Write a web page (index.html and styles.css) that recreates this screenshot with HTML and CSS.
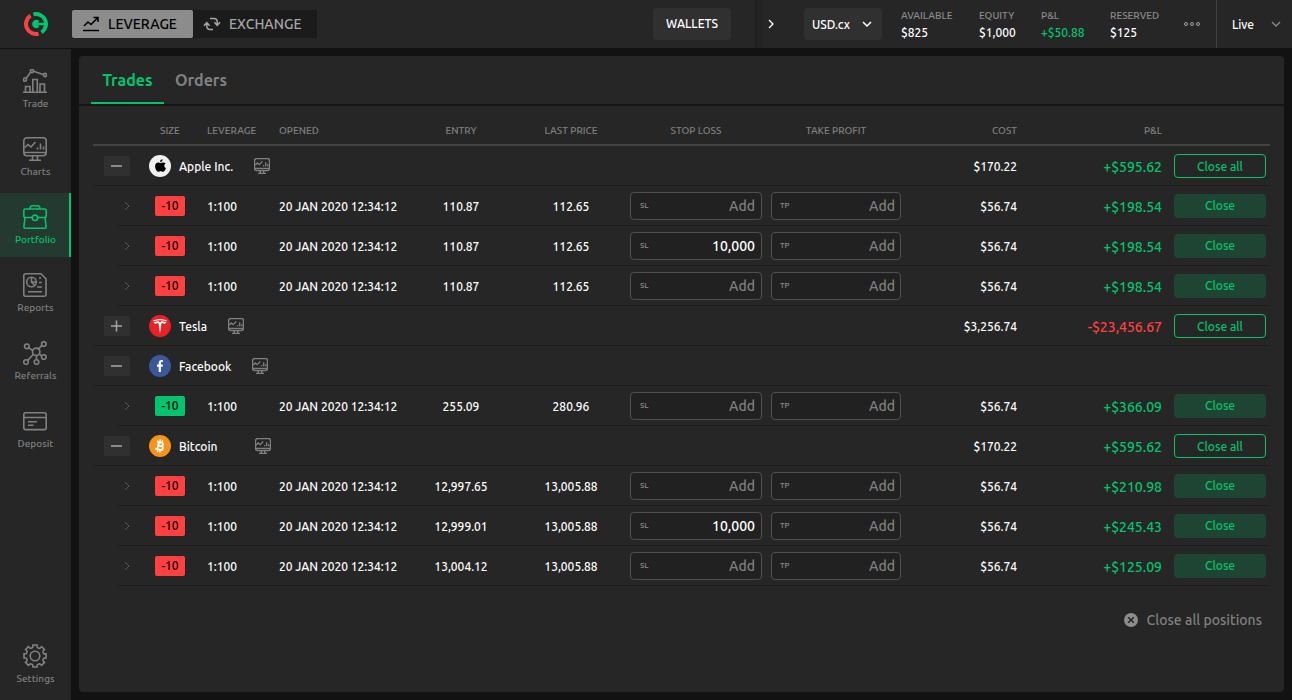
FILE: index.html
```html
<!DOCTYPE html>
<html lang="en">
<head>
<meta charset="utf-8">
<meta name="viewport" content="width=device-width, initial-scale=1">
<title>Portfolio</title>
<link rel="stylesheet" href="styles.css">
</head>
<body>
<svg class="sprite" aria-hidden="true">
  <symbol id="i-chart" viewBox="0 0 24 24"><path d="M4 .8h16a3.2 3.2 0 0 1 3.2 3.2v11.500a3.200 3.200 0 0 1-3.200 3.200H4a3.200 3.200 0 0 1-3.200-3.200V4A3.200 3.200 0 0 1 4 .8zM1 15.500h22M9.500 19v4M14.500 19v4M6 23.200h12M2 10.500l3-3 3 2.500 4.500-5M14.500 12.500v-2M17.500 12.500v-6M20.500 12.500v-3"/></symbol>
  <symbol id="i-right" viewBox="0 0 8 10"><path d="M2 1l4 4-4 4"/></symbol>
  <symbol id="i-down" viewBox="0 0 10 6"><path d="M1 1l4 4 4-4"/></symbol>
</svg>

<header class="topbar">
  <a class="logo" href="#" aria-label="Home">
    <svg viewBox="0 0 24 24"><g fill="none" stroke-width="4"><path stroke="#00c56e" d="M9.400 2.350A10 10 0 0 1 17.500 20.350"/><path stroke="#ff4040" d="M6.500 3.650A10 10 0 0 0 14.600 21.650"/><path stroke="#00c56e" stroke-width="3.400" d="M14.200 10.300A2.500 2.500 0 1 0 14.200 13.700"/><path stroke="#00c56e" stroke-width="2.600" d="M11 12H21"/></g></svg>
  </a>
  <div class="modes">
    <button class="mode mode-active" type="button"><svg viewBox="0 0 18 16"><path d="M1 14.500h16M2 10l4-4 3 2.500L15.500 2M11.500 1.500H16V6"/></svg>LEVERAGE</button>
    <button class="mode" type="button"><svg viewBox="0 0 18 16"><path d="M3.800 7v3.500a3 3 0 0 0 3 3H10M1 9.800l2.800-3.200 2.800 3.200M14.200 9v-3.500a3 3 0 0 0-3-3H7M17 6.200l-2.800 3.200-2.800-3.200"/></svg>EXCHANGE</button>
  </div>
  <button class="wallets" type="button">WALLETS</button>
  <div class="account">
    <button class="expand" type="button" aria-label="Collapse"><svg><use href="#i-right"/></svg></button>
    <div class="pick pick-currency"><select aria-label="Currency"><option>USD.cx</option></select><svg><use href="#i-down"/></svg></div>
    <dl class="stats">
      <div><dt>AVAILABLE</dt><dd>$825</dd></div>
      <div><dt>EQUITY</dt><dd>$1,000</dd></div>
      <div><dt>P&amp;L</dt><dd class="up">+$50.88</dd></div>
      <div><dt>RESERVED</dt><dd>$125</dd></div>
    </dl>
    <button class="more" type="button" aria-label="More"><svg viewBox="0 0 16 4"><circle cx="2" cy="2" r="1.500"/><circle cx="8" cy="2" r="1.500"/><circle cx="14" cy="2" r="1.500"/></svg></button>
    <div class="pick pick-live"><select aria-label="Account mode"><option>Live</option></select><svg><use href="#i-down"/></svg></div>
  </div>
</header>

<div class="body">
  <nav class="side" aria-label="Main">
    <a href="#"><svg viewBox="0 0 24 24"><path d="M0 23.200h24M2.500 23v-5.500h4.500V23M9.800 23V10.500h4.500V23M17 23v-8h4.500v8M3.200 9.200l4.600-6.200M10.500 2.300l9.600 3.200"/><circle cx="2" cy="10.700" r="1.600"/><circle cx="9" cy="2" r="1.600"/><circle cx="22" cy="6" r="1.600"/></svg>Trade</a>
    <a href="#"><svg><use href="#i-chart"/></svg>Charts</a>
    <a href="#" class="current" aria-current="page"><svg viewBox="0 0 24 24"><rect x=".8" y="4" width="22.400" height="8.500" rx="1.800"/><path d="M7 4c0-2.300 1-3.200 2.500-3.200h5C16 .8 17 1.700 17 4M2 12.500L.9 21.500q0 1.700 1.700 1.700h18.800q1.700 0 1.700-1.700L22 12.500"/><circle cx="12" cy="12.800" r="2.700" class="hole"/></svg>Portfolio</a>
    <a href="#"><svg viewBox="0 0 24 24"><path d="M2.500.8H18l5 5V21.500a1.700 1.700 0 0 1-1.700 1.700H2.500A1.700 1.700 0 0 1 .8 21.500v-19A1.700 1.700 0 0 1 2.500.8zM5 18.800h14M16 5h2M16 9.500h3M14 14h5M8.500 4v5h5M8.500 9l3.300 3.500"/><circle cx="8.500" cy="9" r="4.800"/></svg>Reports</a>
    <a href="#"><svg viewBox="0 0 24 24"><path d="M5.600 6.600l4.600 3.200M18.700 4.600l-4 4M18.800 14.800l-2.700-1.700M13.500 14.500v4M10.300 13.500l-5.700 5.900"/><circle cx="13.200" cy="10.800" r="3.700"/><circle cx="3.800" cy="5.300" r="2.300"/><circle cx="20.800" cy="3" r="2.300"/><circle cx="20.800" cy="16" r="2.300"/><circle cx="13.500" cy="21" r="2.300"/><circle cx="3" cy="21" r="2.300"/></svg>Referrals</a>
    <a href="#"><svg viewBox="0 0 24 24"><rect x=".8" y="3.800" width="22.400" height="16.800" rx="1.800"/><path d="M1 8.500h22M5 12.800h9M5 16.300h5.500"/></svg>Deposit</a>
    <a href="#" class="settings"><svg viewBox="0 0 24 24"><circle cx="12" cy="12" r="4.800"/><path d="M9.200 3.700q.7-.3.700-1V1h4.200v1.700q0 .7.700 1l1.200.5q.7.300 1.200-.2L18.600 2.600l2.900 2.900-1.300 1.300q-.5.500-.2 1.200l.5 1.200q.3.700 1 .7H23v4.200h-1.500q-.7 0-1 .7L20 15.900q-.3.700.2 1.200l1.300 1.300-2.900 2.900-1.400-1.200q-.5-.5-1.200-.2l-1.200.5q-.7.300-.7 1V23H9.900v-1.600q0-.7-.7-1L8 19.900q-.7-.3-1.200.2l-1.400 1.200-2.900-2.900 1.300-1.300q.5-.5.200-1.200l-.5-1.200q-.3-.7-1-.7H1V9.800h1.500q.7 0 1-.7L4 8q.3-.7-.2-1.200L2.500 5.500l2.900-2.900L6.800 4q.5.500 1.200.2z"/></svg>Settings</a>
  </nav>

  <main class="panel">
    <div class="tabs" role="tablist">
      <button class="tab" type="button" role="tab" aria-selected="true">Trades</button>
      <button class="tab" type="button" role="tab" aria-selected="false">Orders</button>
    </div>
    <div class="content">
      <table class="trades">
        <colgroup><col class="c-indent"><col class="c-arrow"><col class="c-size"><col class="c-lev"><col class="c-opened"><col class="c-price"><col class="c-price"><col class="c-limit"><col class="c-limit"><col class="c-cost"><col class="c-pnl"><col class="c-action"></colgroup>
        <thead>
          <tr><td colspan="2"></td><th class="size">SIZE</th><th>LEVERAGE</th><th>OPENED</th><th class="mid">ENTRY</th><th class="mid">LAST PRICE</th><th class="mid">STOP LOSS</th><th class="mid">TAKE PROFIT</th><th class="end">COST</th><th class="end">P&amp;L</th><td></td></tr>
        </thead>
        <tbody>
          <tr class="group"><td class="fold" colspan="2"><button type="button" aria-label="Collapse Apple Inc."><svg viewBox="0 0 12 12"><path d="M0 6h11"/></svg></button></td>
            <td class="name" colspan="7"><div class="asset"><svg class="brand" viewBox="0 0 22 22"><circle cx="11" cy="11" r="11" fill="#f0f0f2"/><path fill="#000" d="M13.600 4.200c.1 1.700-1.300 2.900-2.600 2.800-.1-1.500 1.200-2.800 2.600-2.800zM16.600 8.600c-1.900 1.200-1.700 3.800.3 4.700-.6 1.700-1.700 3.500-2.900 3.500-.8 0-1.300-.5-2.300-.5s-1.500.5-2.200.5c-1.700 0-3.400-3.200-3.400-5.600 0-2.300 1.400-3.700 3.100-3.700 1 0 1.700.6 2.400.6s1.500-.7 2.600-.7c1 0 1.800.4 2.400 1.200z"/></svg><span>Apple Inc.</span><svg class="monitor"><use href="#i-chart"/></svg></div></td>
            <td class="end">$170.22</td><td class="pnl up">+$595.62</td><td class="action"><button class="close-group" type="button">Close all</button></td></tr>
          <tr class="leaf"><td></td><td class="arrow"><svg><use href="#i-right"/></svg></td><td class="size"><span class="badge">-10</span></td><td>1:100</td><td>20 JAN 2020 12:34:12</td><td class="mid">110.87</td><td class="mid">112.65</td><td class="limit"><label>SL<input type="text" placeholder="Add"></label></td><td class="limit"><label>TP<input type="text" placeholder="Add"></label></td><td class="end">$56.74</td><td class="pnl up">+$198.54</td><td class="action"><button type="button">Close</button></td></tr>
          <tr class="leaf"><td></td><td class="arrow"><svg><use href="#i-right"/></svg></td><td class="size"><span class="badge">-10</span></td><td>1:100</td><td>20 JAN 2020 12:34:12</td><td class="mid">110.87</td><td class="mid">112.65</td><td class="limit"><label>SL<input type="text" value="10,000"></label></td><td class="limit"><label>TP<input type="text" placeholder="Add"></label></td><td class="end">$56.74</td><td class="pnl up">+$198.54</td><td class="action"><button type="button">Close</button></td></tr>
          <tr class="leaf"><td></td><td class="arrow"><svg><use href="#i-right"/></svg></td><td class="size"><span class="badge">-10</span></td><td>1:100</td><td>20 JAN 2020 12:34:12</td><td class="mid">110.87</td><td class="mid">112.65</td><td class="limit"><label>SL<input type="text" placeholder="Add"></label></td><td class="limit"><label>TP<input type="text" placeholder="Add"></label></td><td class="end">$56.74</td><td class="pnl up">+$198.54</td><td class="action"><button type="button">Close</button></td></tr>
        </tbody>
        <tbody>
          <tr class="group"><td class="fold" colspan="2"><button type="button" aria-label="Expand Tesla"><svg viewBox="0 0 12 12"><path d="M0 6h11M5.500 .5v11"/></svg></button></td>
            <td class="name" colspan="7"><div class="asset"><svg class="brand" viewBox="0 0 22 22"><circle cx="11" cy="11" r="11" fill="#e82127"/><path fill="#fff" d="M4 5.600q7-2.600 14 0l-.4.800q-6.600-2.200-13.200 0zM4.700 7.200Q7.500 6.300 9.700 6.300L11 7.800l1.300-1.500q2.200 0 5 .9-.8 1.700-2.300 1.800l-.4-.8-2-.2L11 18.500 9.400 8l-2 .2L7 9Q5.500 8.900 4.700 7.200z"/></svg><span>Tesla</span><svg class="monitor"><use href="#i-chart"/></svg></div></td>
            <td class="end">$3,256.74</td><td class="pnl down">-$23,456.67</td><td class="action"><button class="close-group" type="button">Close all</button></td></tr>
        </tbody>
        <tbody>
          <tr class="group"><td class="fold" colspan="2"><button type="button" aria-label="Collapse Facebook"><svg viewBox="0 0 12 12"><path d="M0 6h11"/></svg></button></td>
            <td class="name" colspan="7"><div class="asset"><svg class="brand" viewBox="0 0 22 22"><circle cx="11" cy="11" r="11" fill="#3b5998"/><path fill="#fff" d="M9.700 17v-5.300H8V9.600h1.700V8c0-1.900 1.100-2.900 2.800-2.900.8 0 1.400.1 1.400.1v1.900h-1c-.8 0-1 .5-1 1v1.500h2l-.3 2.100h-1.700V17z"/></svg><span>Facebook</span><svg class="monitor"><use href="#i-chart"/></svg></div></td>
            <td></td><td></td><td></td></tr>
          <tr class="leaf"><td></td><td class="arrow"><svg><use href="#i-right"/></svg></td><td class="size"><span class="badge badge-up">-10</span></td><td>1:100</td><td>20 JAN 2020 12:34:12</td><td class="mid">255.09</td><td class="mid">280.96</td><td class="limit"><label>SL<input type="text" placeholder="Add"></label></td><td class="limit"><label>TP<input type="text" placeholder="Add"></label></td><td class="end">$56.74</td><td class="pnl up">+$366.09</td><td class="action"><button type="button">Close</button></td></tr>
        </tbody>
        <tbody>
          <tr class="group"><td class="fold" colspan="2"><button type="button" aria-label="Collapse Bitcoin"><svg viewBox="0 0 12 12"><path d="M0 6h11"/></svg></button></td>
            <td class="name" colspan="7"><div class="asset"><svg class="brand" viewBox="0 0 22 22"><circle cx="11" cy="11" r="11" fill="#f7931a"/><g transform="rotate(13 11 11)" fill="none" stroke="#fff"><path stroke-width="1.300" d="M9.800 4.500v2.300M12.200 4.500v2.300M9.800 15.200v2.300M12.200 15.200v2.300"/><path stroke-width="1.900" d="M7 7.300h4.700a1.800 1.800 0 0 1 0 3.600H9M9 10.900h3.300a1.900 1.900 0 0 1 0 3.800H7M9.100 7v8"/></g></svg><span class="name-wide">Bitcoin</span><svg class="monitor"><use href="#i-chart"/></svg></div></td>
            <td class="end">$170.22</td><td class="pnl up">+$595.62</td><td class="action"><button class="close-group" type="button">Close all</button></td></tr>
          <tr class="leaf"><td></td><td class="arrow"><svg><use href="#i-right"/></svg></td><td class="size"><span class="badge">-10</span></td><td>1:100</td><td>20 JAN 2020 12:34:12</td><td class="mid">12,997.65</td><td class="mid">13,005.88</td><td class="limit"><label>SL<input type="text" placeholder="Add"></label></td><td class="limit"><label>TP<input type="text" placeholder="Add"></label></td><td class="end">$56.74</td><td class="pnl up">+$210.98</td><td class="action"><button type="button">Close</button></td></tr>
          <tr class="leaf"><td></td><td class="arrow"><svg><use href="#i-right"/></svg></td><td class="size"><span class="badge">-10</span></td><td>1:100</td><td>20 JAN 2020 12:34:12</td><td class="mid">12,999.01</td><td class="mid">13,005.88</td><td class="limit"><label>SL<input type="text" value="10,000"></label></td><td class="limit"><label>TP<input type="text" placeholder="Add"></label></td><td class="end">$56.74</td><td class="pnl up">+$245.43</td><td class="action"><button type="button">Close</button></td></tr>
          <tr class="leaf"><td></td><td class="arrow"><svg><use href="#i-right"/></svg></td><td class="size"><span class="badge">-10</span></td><td>1:100</td><td>20 JAN 2020 12:34:12</td><td class="mid">13,004.12</td><td class="mid">13,005.88</td><td class="limit"><label>SL<input type="text" placeholder="Add"></label></td><td class="limit"><label>TP<input type="text" placeholder="Add"></label></td><td class="end">$56.74</td><td class="pnl up">+$125.09</td><td class="action"><button type="button">Close</button></td></tr>
        </tbody>
      </table>
      <button class="close-all" type="button"><svg viewBox="0 0 14 14"><circle cx="7" cy="7" r="7" fill="#8c8c8c"/><path d="M4.200 4.200l5.600 5.600M9.800 4.200l-5.600 5.600" stroke="#262626" stroke-width="1.600"/></svg>Close all positions</button>
    </div>
  </main>
</div>
</body>
</html>
```
FILE: styles.css
```css
:root {
  --green: #00c56e;
  --red: #ff4040;
  --surface: #262626;
  --raised: #303030;
  --muted: #808080;
}

* { box-sizing: border-box; }

body {
  margin: 0;
  min-height: 100vh;
  display: flex;
  flex-direction: column;
  background: #121212;
  color: #fff;
  font: 550 12px/16px Ubuntu, "Noto Sans", sans-serif;
}

button, input, select {
  font: inherit;
  color: inherit;
  border: 0;
  margin: 0;
  padding: 0;
  background: none;
}

button, select { cursor: pointer; }
a { color: inherit; text-decoration: none; }
svg { display: block; flex: none; fill: none; stroke: currentColor; }
.brand, .logo svg, .close-all svg { stroke: none; }
.close-all path { stroke: var(--surface); }
.sprite { width: 0; height: 0; position: absolute; }
.up { color: var(--green); }
.down { color: var(--red); }

/* Top bar */
.topbar {
  display: flex;
  align-items: center;
  min-height: 48px;
  background: var(--surface);
}

.logo { width: 72px; display: flex; justify-content: center; }
.logo svg { width: 24px; height: 24px; }

.modes {
  display: flex;
  background: #1b1b1b;
  border-radius: 2px;
  margin-right: auto;
}

.mode {
  display: flex;
  align-items: center;
  gap: 8px;
  height: 28px;
  padding: 0 16px 0 10px;
  border-radius: 2px;
  font-size: 14px;
  color: #a6a6a6;
}

.mode svg { width: 18px; height: 16px; stroke-width: 1.5; }
.mode-active { background: #8c8c8c; color: #000; }

.wallets {
  height: 32px;
  padding: 0 13px;
  margin-right: 24px;
  border-radius: 4px;
  background: var(--raised);
}

.account {
  display: flex;
  align-items: center;
  align-self: stretch;
  background: linear-gradient(to right, #1f1f1f, var(--surface) 8px);
}

.expand { width: 32px; padding-left: 12px; margin-right: 17px; }
.expand svg { width: 8px; height: 10px; stroke-width: 1.3; }

.pick { display: grid; align-items: center; }
.pick select, .pick svg { grid-area: 1 / 1; }
.pick select { appearance: none; width: 100%; height: 100%; padding-top: 1px; outline: 0; }
.pick svg { width: 10px; height: 6px; justify-self: end; pointer-events: none; }

.pick-currency { width: 78px; height: 32px; border-radius: 4px; background: var(--raised); }
.pick-currency select { padding-left: 8px; }
.pick-currency svg { margin-right: 10px; stroke-width: 1.5; }

.pick-live { width: 76px; align-self: stretch; border-left: 1px solid #404040; }
.pick-live select { padding-left: 15px; }
.pick-live svg { margin-right: 11px; color: #8c8c8c; stroke-width: 1.3; }

.stats {
  display: grid;
  grid-template-columns: 78px 62px 69px 74px;
  margin: 0 0 0 19px;
  line-height: 17px;
}

.stats dt { font-size: 10px; color: #8c8c8c; }
.stats dd { margin: 0; }
.more { color: #a6a6a6; margin-right: 16px; }
.more svg { width: 16px; height: 4px; }

/* Side navigation */
.body { flex: 1; display: flex; }

.side {
  width: 71px;
  flex: none;
  display: flex;
  flex-direction: column;
  gap: 4px;
  padding: 8px 0 4px;
  margin-top: 1px;
  background: var(--surface);
  color: var(--muted);
  font-size: 10px;
}

.side a {
  display: flex;
  flex-direction: column;
  align-items: center;
  gap: 3px;
  height: 64px;
  padding-top: 12px;
}

.side svg { width: 24px; height: 24px; margin-right: 1px; stroke-width: 1.6; }
.side .current { background: #24392f; color: var(--green); box-shadow: inset -2px 0 var(--green); }
.hole { fill: #24392f; }
.side .settings { margin-top: auto; }

/* Panel */
.panel {
  flex: 1;
  min-width: 0;
  margin: 8px;
  border-radius: 4px;
  background: var(--surface);
}

.tabs { display: flex; padding-left: 12px; border-bottom: 2px solid #161616; }

.tab {
  min-width: 73px;
  height: 48px;
  padding: 2px 11px 0;
  border-bottom: 2px solid transparent;
  font-size: 16px;
  font-weight: 600;
  color: var(--muted);
}

.tab[aria-selected="true"] { color: var(--green); border-color: var(--green); }

.content { display: flex; flex-direction: column; padding: 0 14px; }

/* Trades table */
.trades { width: 100%; table-layout: fixed; border-spacing: 0; }
.trades th, .trades td { height: 40px; padding: 0; text-align: left; white-space: nowrap; }
.trades tbody td { border-bottom: 1px solid #1c1c1c; padding-top: 3px; }
.trades .leaf td:first-child { border-bottom: 0; }

.trades .fold, .trades .name, .trades .arrow, .trades td.size, .trades .limit, .trades .action { padding-top: 1px; }

.trades thead th, .trades thead td {
  padding-top: 11px;
  border-bottom: 2px solid #434343;
  font-size: 10px;
  font-weight: 550;
  line-height: 12px;
  color: var(--muted);
}

.c-indent { width: 24px; }
.c-arrow { width: 32px; }
.c-size { width: 58px; }
.c-lev { width: 72px; }
.c-opened { width: 127px; }
.c-price { width: 110px; }
.c-limit { width: 140px; }
.c-cost { width: 111px; }
.c-pnl { width: 145px; }
.c-action { width: 108px; }

.trades .mid { text-align: center; }
.trades .end, .trades .pnl { text-align: right; }
.trades th.size { padding-left: 11px; }
.trades td.size { padding-left: 6px; }
.pnl { font-size: 14px; }

.fold button {
  display: grid;
  place-items: center;
  width: 26px;
  height: 20px;
  margin-left: 11px;
  border-radius: 2px;
  background: var(--raised);
  color: #a6a6a6;
}

.fold svg { width: 12px; height: 12px; stroke-width: 1.5; }

.asset { display: flex; align-items: center; }
.asset span { padding-top: 1px; }
.brand { width: 22px; height: 22px; margin-right: 8px; }
.name-wide { min-width: 55px; }
.monitor { width: 16px; height: 16px; margin-left: 21px; color: var(--muted); stroke-width: 2; }

.arrow svg { width: 8px; height: 10px; margin-left: 6px; color: #595959; }

.badge {
  display: block;
  width: 30px;
  border-radius: 2px;
  background: var(--red);
  color: #000;
  line-height: 20px;
  text-align: center;
}

.badge-up { background: var(--green); }

.limit label {
  display: flex;
  align-items: center;
  height: 28px;
  margin: 0 4px;
  padding: 0 6px 0 9px;
  border: 1px solid #505050;
  border-radius: 4px;
  background: #212121;
  font-size: 8px;
  color: #8c8c8c;
}

.limit + .limit label { margin: 0 5px; padding: 0 5px 0 8px; }

.limit input {
  flex: 1;
  min-width: 0;
  font-size: 14px;
  text-align: right;
  color: #fff;
  outline: 0;
}

.limit input::placeholder { color: var(--muted); opacity: 1; }

.action button {
  display: block;
  width: 92px;
  height: 24px;
  margin-left: 12px;
  border-radius: 4px;
  background: #1e4534;
  color: var(--green);
}

.action .close-group { background: none; border: 1px solid var(--green); padding-top: 2px; }

.close-all {
  display: flex;
  align-items: center;
  align-self: flex-end;
  gap: 9px;
  margin: 24px 8px 24px 0;
  font-size: 14px;
  line-height: 20px;
  color: var(--muted);
}

.close-all svg { width: 14px; height: 14px; }
```
